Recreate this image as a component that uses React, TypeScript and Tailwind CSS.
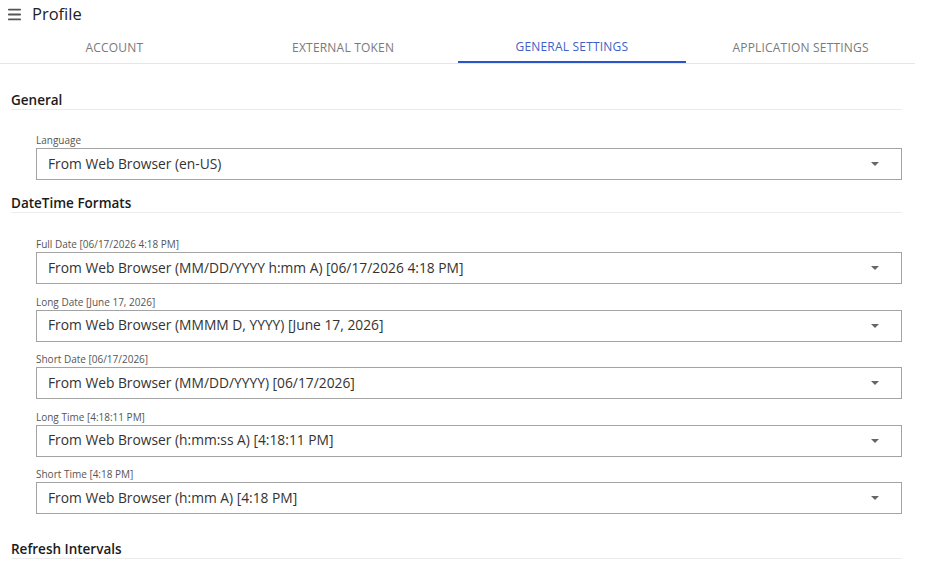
import { Menu } from "lucide-react"

const tabs = ["ACCOUNT", "EXTERNAL TOKEN", "GENERAL SETTINGS", "APPLICATION SETTINGS"]

const dateFields = [
  { label: "Full Date [06/17/2026 4:18 PM]", value: "From Web Browser (MM/DD/YYYY h:mm A) [06/17/2026 4:18 PM]" },
  { label: "Long Date [June 17, 2026]", value: "From Web Browser (MMMM D, YYYY) [June 17, 2026]" },
  { label: "Short Date [06/17/2026]", value: "From Web Browser (MM/DD/YYYY) [06/17/2026]" },
  { label: "Long Time [4:18:11 PM]", value: "From Web Browser (h:mm:ss A) [4:18:11 PM]" },
  { label: "Short Time [4:18 PM]", value: "From Web Browser (h:mm A) [4:18 PM]" },
]

function SectionTitle({ children }: { children: React.ReactNode }) {
  return (
    <div className="ml-[11px] mr-[13px] border-b border-[#ececec]">
      <h2 className="text-[13.5px] font-semibold leading-[18px] text-[#1a1a1a]">{children}</h2>
    </div>
  )
}

function SelectField({ label, value }: { label: string; value: string }) {
  return (
    <div className="ml-[36px] mr-[13px]">
      <div className="mb-[1px] text-[10px] leading-[14px] text-[#555]">{label}</div>
      <div className="flex h-[32px] items-center justify-between border border-[#a3a3a3] pl-[11px] pr-[22px]">
        <span className="text-[13.8px] text-[#333]">{value}</span>
        <svg width="8" height="4" viewBox="0 0 8 4">
          <path d="M0 0h8L4 4z" fill="#666" />
        </svg>
      </div>
    </div>
  )
}

export default function App() {
  return (
    <div className="h-[575px] w-[915px] overflow-hidden bg-white font-['Open_Sans',sans-serif]">
      <header className="flex h-[29px] items-center gap-[9px] pl-[6px]">
        <Menu size={17} strokeWidth={2.5} className="text-[#555]" />
        <h1 className="text-[16.5px] text-[#222]">Profile</h1>
      </header>

      <nav className="grid grid-cols-4 border-b border-[#e6e6e6]">
        {tabs.map((t, i) => (
          <div
            key={t}
            className={
              i === 2
                ? "flex h-[34px] items-center justify-center border-b-2 border-[#2a55c9] pt-[3px] text-[12px] tracking-[0.2px] text-[#3f5fc8]"
                : "flex h-[34px] items-center justify-center pt-[3px] text-[12px] tracking-[0.2px] text-[#7a7a7a]"
            }
          >
            {t}
          </div>
        ))}
      </nav>

      <section className="pt-[27px]">
        <SectionTitle>General</SectionTitle>
        <div className="mt-[23px]">
          <SelectField label="Language" value="From Web Browser (en-US)" />
        </div>
      </section>

      <section className="pt-[14px]">
        <SectionTitle>DateTime Formats</SectionTitle>
        <div className="mt-[24px] flex flex-col gap-[10.5px]">
          {dateFields.map((f) => (
            <SelectField key={f.label} label={f.label} value={f.value} />
          ))}
        </div>
      </section>

      <section className="pt-[26px]">
        <SectionTitle>Refresh Intervals</SectionTitle>
      </section>
    </div>
  )
}
